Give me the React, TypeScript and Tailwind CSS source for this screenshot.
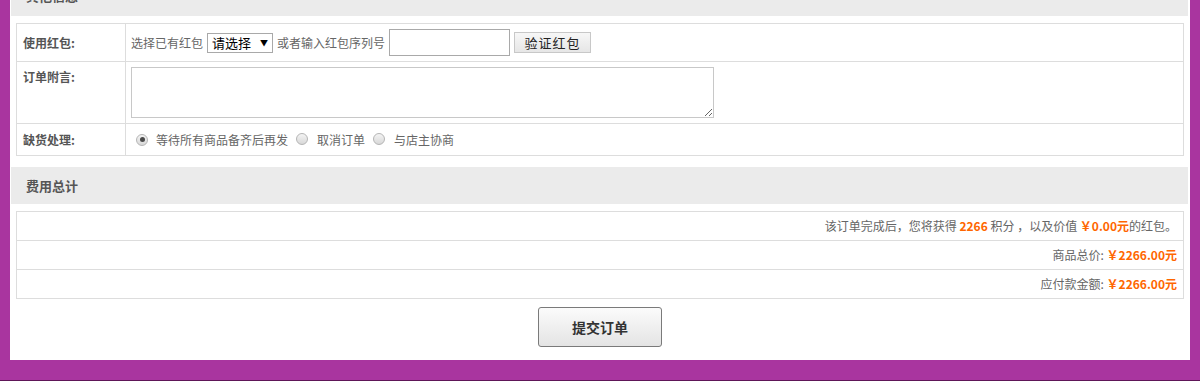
import React from "react";

const font = { fontFamily: '"Noto Sans CJK SC", "Microsoft YaHei", sans-serif' };

function Radio({ checked }: { checked?: boolean }) {
  return (
    <span className="relative inline-flex h-[12px] w-[12px] shrink-0 items-center justify-center rounded-full border border-[#b5b5b5] bg-gradient-to-b from-[#f4f4f4] to-[#d8d8d8]">
      {checked && <span className="h-[5px] w-[5px] rounded-full bg-[#4a4a4a]" />}
    </span>
  );
}

export default function App() {
  return (
    <div className="h-[381px] w-[1200px] overflow-hidden bg-[#a9359f]" style={font}>
      <div className="mx-[10px] h-[360px] overflow-hidden bg-white">
        {/* header 1 (cut off) */}
        <div className="ml-[1px] mr-[2px] -mt-[21px] flex h-[37px] items-center bg-[#ebebeb] pb-[4px] pl-[15px] text-[13px] font-bold text-[#555]">
          其他信息
        </div>

        {/* table 1 */}
        <div className="ml-[6px] mt-[7px] w-[1168px] border border-[#dddddd] text-[12px] text-[#666]">
          <div className="flex h-[38px] border-b border-[#dddddd]">
            <div className="flex w-[109px] shrink-0 items-center border-r border-[#dddddd] pl-[6px] font-bold text-[#555]">使用红包:</div>
            <div className="flex items-center gap-[4px] pl-[5px]">
              <span>选择已有红包</span>
              <span className="flex h-[20px] w-[66px] items-center border border-[#a9a9a9] bg-white pl-[4px] text-[13px] text-black">
                请选择
                <span className="ml-[9px] text-[8px]">▼</span>
              </span>
              <span>或者输入红包序列号</span>
              <span className="h-[27px] w-[121px] border border-[#a9a9a9] bg-white" />
              <span className="flex h-[21px] w-[77px] items-center justify-center border border-[#c8c8c8] bg-gradient-to-b from-[#f7f7f7] to-[#e6e6e6] text-[13px] tracking-[1px] text-[#222]">
                验证红包
              </span>
            </div>
          </div>
          <div className="flex h-[62px] border-b border-[#dddddd]">
            <div className="w-[109px] shrink-0 border-r border-[#dddddd] pl-[6px] pt-[6px] font-bold leading-[18px] text-[#555]">订单附言:</div>
            <div className="pl-[5px] pt-[5px]">
              <textarea className="block h-[51px] w-[583px] resize border border-[#c8c8c8] bg-white outline-none" />
            </div>
          </div>
          <div className="flex h-[31px]">
            <div className="flex w-[109px] shrink-0 items-center border-r border-[#dddddd] pl-[6px] font-bold text-[#555]">缺货处理:</div>
            <div className="flex items-center pl-[10px]">
              <Radio checked />
              <span className="ml-[8px]">等待所有商品备齐后再发</span>
              <span className="ml-[8px]"><Radio /></span>
              <span className="ml-[9px]">取消订单</span>
              <span className="ml-[8px]"><Radio /></span>
              <span className="ml-[9px]">与店主协商</span>
            </div>
          </div>
        </div>

        {/* header 2 */}
        <div className="ml-[1px] mr-[2px] mt-[11px] flex h-[37px] items-center bg-[#ebebeb] pl-[15px] text-[13px] font-bold text-[#555]">
          费用总计
        </div>

        {/* table 2 */}
        <div className="ml-[6px] mt-[7px] w-[1168px] border border-[#dddddd] text-[12px] text-[#666]">
          <div className="flex h-[29px] items-center justify-end border-b border-[#dddddd] pr-[6px]">
            <span>该订单完成后，您将获得&nbsp;</span>
            <span className="font-bold text-[#ff6600]">2266</span>
            <span>&nbsp;积分 ，以及价值&nbsp;</span>
            <span className="font-bold text-[#ff6600]">￥0.00元</span>
            <span>的红包。</span>
          </div>
          <div className="flex h-[29px] items-center justify-end border-b border-[#dddddd] pr-[6px]">
            <span>商品总价:&nbsp;</span>
            <span className="font-bold text-[#ff6600]">￥2266.00元</span>
          </div>
          <div className="flex h-[28px] items-center justify-end pr-[6px]">
            <span>应付款金额:&nbsp;</span>
            <span className="font-bold text-[#ff6600]">￥2266.00元</span>
          </div>
        </div>

        <div className="mt-[8px] flex justify-center">
          <button className="flex h-[40px] w-[124px] items-center justify-center rounded-[3px] border border-[#7a7a7a] bg-gradient-to-b from-[#fbfbfb] to-[#e4e4e4] text-[14px] font-bold text-[#333]">
            提交订单
          </button>
        </div>
      </div>
      <div className="mt-[20px] h-[1px] bg-[#5e1658]" />
    </div>
  );
}
